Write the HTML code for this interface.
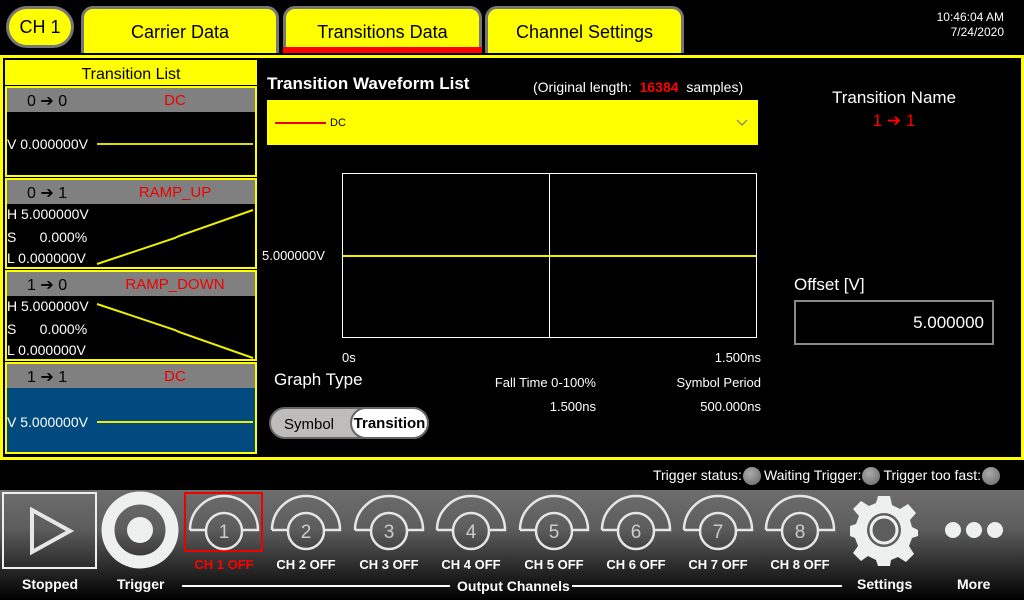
<!DOCTYPE html>
<html><head><meta charset="utf-8"><style>
*{margin:0;padding:0;box-sizing:border-box}
body{width:1024px;height:600px;background:#000;position:relative;overflow:hidden;font-family:"Liberation Sans",sans-serif;color:#fff}
.a{position:absolute}
.tab{position:absolute;top:6px;height:47px;background:#ff0;border:3px solid #777;border-bottom:none;border-radius:12px 12px 0 0;color:#000;font-size:18px;text-align:center;line-height:46px}
.item{position:absolute;left:5px;width:252px;border:2px solid #ff0;background:#000}
.ih{height:24px;background:#808080;color:#000;font-size:16px;position:relative}
.ih .n{position:absolute;left:20px;top:3px}
.ih .t{position:absolute;left:88px;width:160px;text-align:center;top:4px;color:#e00;font-size:15px}
.lbl{position:absolute;left:0;font-size:14px;color:#fff}
.ch{position:absolute;top:557px;width:80px;text-align:center;font-size:13px;font-weight:bold}
.bl{position:absolute;top:576px;font-size:14px;font-weight:bold}
.dot{display:inline-block;width:18px;height:18px;border-radius:9px;background:radial-gradient(circle at 40% 35%,#aaa,#666);vertical-align:middle;margin:0 3px 0 1px}
</style></head><body>
<div class="a" style="left:6px;top:6px;width:68px;height:42px;background:#ff0;border:3px solid #777;border-radius:21px;color:#000;font-size:18px;text-align:center;line-height:36px">CH 1</div>
<div class="tab" style="left:81px;width:198px">Carrier Data</div>
<div class="tab" style="left:283px;width:199px">Transitions Data</div>
<div class="a" style="left:283px;top:47px;width:199px;height:6px;background:#f00"></div>
<div class="tab" style="left:485px;width:199px">Channel Settings</div>
<div class="a" style="left:900px;top:10px;width:104px;text-align:right;font-size:12px;line-height:15px">10:46:04 AM<br>7/24/2020</div>

<div class="a" style="left:0;top:55px;width:1024px;height:405px;border:3px solid #ff0"></div>
<div class="a" style="left:5px;top:60px;width:252px;height:25px;background:#ff0;border:2px solid #ff0;border-bottom:none;color:#000;font-size:16px;text-align:center;line-height:25px">Transition List</div>

<div class="item" style="top:86px;height:91px"><div class="ih"><span class="n">0 ➔ 0</span><span class="t">DC</span></div>
<div class="lbl" style="top:48px">V 0.000000V</div>
<svg class="a" style="left:0;top:0" width="248" height="88"><line x1="90" y1="56" x2="246" y2="56" stroke="#dd0" stroke-width="2"/></svg></div>

<div class="item" style="top:178px;height:91px"><div class="ih"><span class="n">0 ➔ 1</span><span class="t">RAMP_UP</span></div>
<div class="lbl" style="top:26px">H 5.000000V</div><div class="lbl" style="top:49px">S&nbsp;&nbsp;&nbsp;&nbsp;&nbsp; 0.000%</div><div class="lbl" style="top:70px">L 0.000000V</div>
<svg class="a" style="left:0;top:0" width="248" height="88"><polyline points="90,84 168,58 172,56 246,30" fill="none" stroke="#ee0" stroke-width="2"/></svg></div>

<div class="item" style="top:270px;height:91px"><div class="ih"><span class="n">1 ➔ 0</span><span class="t">RAMP_DOWN</span></div>
<div class="lbl" style="top:26px">H 5.000000V</div><div class="lbl" style="top:49px">S&nbsp;&nbsp;&nbsp;&nbsp;&nbsp; 0.000%</div><div class="lbl" style="top:70px">L 0.000000V</div>
<svg class="a" style="left:0;top:0" width="248" height="88"><polyline points="90,32 168,58 172,60 246,86" fill="none" stroke="#ee0" stroke-width="2"/></svg></div>

<div class="item" style="top:362px;height:92px;background:#004a80"><div class="ih"><span class="n">1 ➔ 1</span><span class="t">DC</span></div>
<div class="lbl" style="top:50px">V 5.000000V</div>
<svg class="a" style="left:0;top:0" width="248" height="88"><line x1="90" y1="58" x2="246" y2="58" stroke="#ee0" stroke-width="2"/></svg></div>

<div class="a" style="left:267px;top:74px;font-size:17px;font-weight:bold">Transition Waveform List</div>
<div class="a" style="left:533px;top:79px;font-size:14px">(Original length: &nbsp;<b style="color:#f00">16384</b>&nbsp; samples)</div>
<div class="a" style="left:267px;top:100px;width:491px;height:45px;background:#ff0"></div>
<svg class="a" style="left:267px;top:100px" width="491" height="45"><line x1="8" y1="23" x2="59" y2="23" stroke="#e00" stroke-width="2"/><polyline points="470,20 475,25 480,20" fill="none" stroke="#777" stroke-width="1.2"/></svg>
<div class="a" style="left:330px;top:117px;font-size:11px;color:#000">DC</div>

<svg class="a" style="left:342px;top:173px" width="416" height="166"><rect x="0.5" y="0.5" width="414" height="164" fill="none" stroke="#fff"/><line x1="207.5" y1="0" x2="207.5" y2="165" stroke="#fff"/><line x1="1" y1="83" x2="414" y2="83" stroke="#ee0" stroke-width="2"/></svg>
<div class="a" style="left:262px;top:248px;font-size:13px">5.000000V</div>
<div class="a" style="left:342px;top:350px;font-size:13px">0s</div>
<div class="a" style="left:660px;top:350px;width:101px;text-align:right;font-size:13px">1.500ns</div>
<div class="a" style="left:274px;top:370px;font-size:17px">Graph Type</div>
<div class="a" style="left:470px;top:375px;width:126px;text-align:right;font-size:13px">Fall Time 0-100%</div>
<div class="a" style="left:640px;top:375px;width:121px;text-align:right;font-size:13px">Symbol Period</div>
<div class="a" style="left:470px;top:399px;width:126px;text-align:right;font-size:13px">1.500ns</div>
<div class="a" style="left:640px;top:399px;width:121px;text-align:right;font-size:13px">500.000ns</div>
<div class="a" style="left:269px;top:407px;width:160px;height:32px;background:#bfbcbc;border:2px solid #666;border-radius:16px"></div>
<div class="a" style="left:284px;top:416px;font-size:15px;color:#000">Symbol</div>
<div class="a" style="left:350px;top:407px;width:79px;height:32px;background:#fff;border:2px solid #666;border-radius:16px;color:#000;font-size:15px;font-weight:bold;text-align:center;line-height:30px">Transition</div>

<div class="a" style="left:794px;top:88px;width:200px;text-align:center;font-size:17px">Transition Name</div>
<div class="a" style="left:794px;top:111px;width:200px;text-align:center;font-size:17px;color:#f00">1 ➔ 1</div>
<div class="a" style="left:794px;top:275px;font-size:17px">Offset [V]</div>
<div class="a" style="left:794px;top:300px;width:200px;height:45px;border:2px solid #888;font-size:17px;text-align:right;padding-right:8px;line-height:41px">5.000000</div>

<div class="a" style="left:560px;top:467px;width:440px;text-align:right;font-size:14px">Trigger status:<span class="dot"></span>Waiting Trigger:<span class="dot"></span>Trigger too fast:<span class="dot" style="margin-right:0"></span></div>

<div class="a" style="left:0;top:490px;width:1024px;height:110px;background:linear-gradient(#6e6d6e 0%,#5e5d5e 35%,#000 100%)"></div>
<svg class="a" style="left:0;top:490px" width="1024" height="110">
<rect x="3" y="3" width="93" height="75" fill="none" stroke="#eee" stroke-width="2"/>
<polygon points="32,20 70,41 32,62" fill="none" stroke="#e6e8e8" stroke-width="4"/>
<circle cx="140" cy="40" r="32" fill="none" stroke="#eef0f0" stroke-width="13"/>
<circle cx="140" cy="40" r="13" fill="#eef0f0"/>
<rect x="185" y="3" width="77" height="58" fill="none" stroke="#e00" stroke-width="2"/>
<g fill="none" stroke="#e6e6e6" stroke-width="2.5">
<path d="M190,40 A34,34 0 0 1 258,40 L242,40 M190,40 L206,40"/><circle cx="224" cy="41" r="18"/>
<path d="M272,40 A34,34 0 0 1 340,40 L324,40 M272,40 L288,40"/><circle cx="306" cy="41" r="18"/>
<path d="M355,40 A34,34 0 0 1 423,40 L407,40 M355,40 L371,40"/><circle cx="389" cy="41" r="18"/>
<path d="M437,40 A34,34 0 0 1 505,40 L489,40 M437,40 L453,40"/><circle cx="471" cy="41" r="18"/>
<path d="M520,40 A34,34 0 0 1 588,40 L572,40 M520,40 L536,40"/><circle cx="554" cy="41" r="18"/>
<path d="M602,40 A34,34 0 0 1 670,40 L654,40 M602,40 L618,40"/><circle cx="636" cy="41" r="18"/>
<path d="M684,40 A34,34 0 0 1 752,40 L736,40 M684,40 L700,40"/><circle cx="718" cy="41" r="18"/>
<path d="M766,40 A34,34 0 0 1 834,40 L818,40 M766,40 L782,40"/><circle cx="800" cy="41" r="18"/>
</g>
<g fill="#ccc" font-family="Liberation Sans" font-size="19" text-anchor="middle">
<text x="224" y="48">1</text><text x="306" y="48">2</text><text x="389" y="48">3</text><text x="471" y="48">4</text><text x="554" y="48">5</text><text x="636" y="48">6</text><text x="718" y="48">7</text><text x="800" y="48">8</text></g>
<g transform="translate(884,40)" fill="#eef0f0">
<path d="M-6,-34 L6,-34 L8,-25 L16,-21 L24,-26 L32,-17 L26,-10 L28,-3 L34,0 L34,6 L28,8 L25,16 L30,24 L22,32 L14,27 L7,30 L6,36 L-6,36 L-8,30 L-16,26 L-23,31 L-31,23 L-26,16 L-29,8 L-34,6 L-34,-4 L-28,-6 L-25,-14 L-31,-21 L-23,-29 L-15,-24 L-8,-27 Z"/>
<circle r="17" fill="#5e5d5e"/><circle r="13" fill="none" stroke="#eef0f0" stroke-width="3"/></g>
<circle cx="953" cy="40" r="8" fill="#eef0f0"/><circle cx="974" cy="40" r="8" fill="#eef0f0"/><circle cx="995" cy="40" r="8" fill="#eef0f0"/>
<line x1="182" y1="96" x2="450" y2="96" stroke="#fff" stroke-width="2"/><line x1="572" y1="96" x2="842" y2="96" stroke="#fff" stroke-width="2"/>
</svg>
<div class="ch" style="left:184px;color:#f00">CH 1 OFF</div>
<div class="ch" style="left:266px">CH 2 OFF</div>
<div class="ch" style="left:349px">CH 3 OFF</div>
<div class="ch" style="left:431px">CH 4 OFF</div>
<div class="ch" style="left:514px">CH 5 OFF</div>
<div class="ch" style="left:596px">CH 6 OFF</div>
<div class="ch" style="left:678px">CH 7 OFF</div>
<div class="ch" style="left:760px">CH 8 OFF</div>
<div class="bl" style="left:22px">Stopped</div>
<div class="bl" style="left:117px">Trigger</div>
<div class="bl" style="left:457px;top:578px">Output Channels</div>
<div class="bl" style="left:857px">Settings</div>
<div class="bl" style="left:957px">More</div>
</body></html>
